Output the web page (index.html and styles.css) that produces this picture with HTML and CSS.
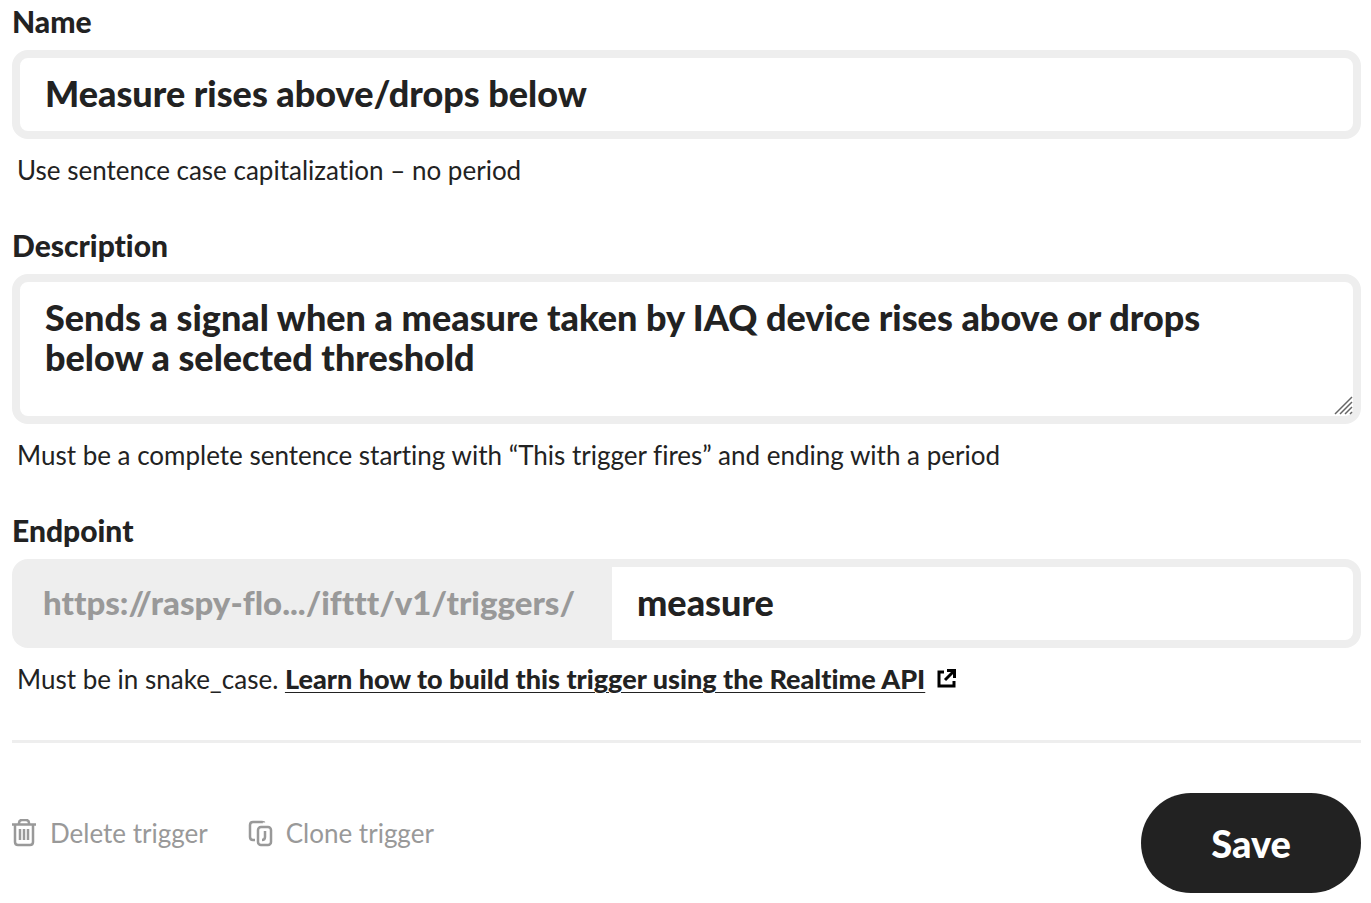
FILE: index.html
```html
<!DOCTYPE html>
<html lang="en">
<head>
<meta charset="utf-8">
<meta name="viewport" content="width=device-width, initial-scale=1">
<title>Edit trigger</title>
<link rel="stylesheet" href="styles.css">
</head>
<body>
<form class="trigger-form">
  <div class="field">
    <label class="label" for="name">Name</label>
    <input class="control" id="name" type="text" value="Measure rises above/drops below">
    <p class="hint">Use sentence case capitalization – no period</p>
  </div>
  <div class="field">
    <label class="label" for="description">Description</label>
    <div class="area">
      <textarea class="control control-area" id="description">Sends a signal when a measure taken by IAQ device rises above or drops below a selected threshold</textarea>
      <svg class="grip" viewBox="0 0 20 20" aria-hidden="true"><path d="M2 18 19 1M7 18 19 6M12 18 19 11M17 18l2-2"/></svg>
    </div>
    <p class="hint">Must be a complete sentence starting with “This trigger fires” and ending with a period</p>
  </div>
  <div class="field">
    <label class="label" for="endpoint">Endpoint</label>
    <div class="group">
      <span class="prefix">https://raspy-flo.../ifttt/v1/triggers/</span>
      <input class="group-input" id="endpoint" type="text" value="measure">
    </div>
    <p class="hint">Must be in snake_case. <a class="link" href="#realtime">Learn how to build this trigger using the Realtime API</a><svg class="external" viewBox="0 0 20 20" aria-hidden="true"><path d="M7 3H2v14h15v-5"/><path d="M8 11 16 3"/><path class="solid" d="M10 0h9v9h-3V3h-6z"/></svg></p>
  </div>
  <div class="footer">
    <div class="actions">
      <button class="action" type="button">
        <svg class="icon" viewBox="0 0 26 28" aria-hidden="true"><path d="M0 5.5h24"/><path d="M7 5V4q0-3 3-3h4q3 0 3 3v1"/><path d="M3 6v17q0 3 3 3h12q3 0 3-3V6"/><path d="M8 10v11M12 10v11M16 10v11"/></svg>
        <span>Delete trigger</span>
      </button>
      <button class="action" type="button">
        <svg class="icon" viewBox="0 0 26 28" aria-hidden="true"><path d="M16 3.5Q16 3 14 3H5Q2 3 2 6v12q0 3 3 3h2"/><rect x="10" y="8" width="13" height="18" rx="3"/><path d="M17 12v6q0 3-3 3"/></svg>
        <span>Clone trigger</span>
      </button>
    </div>
    <button class="save" type="submit">Save</button>
  </div>
</form>
</body>
</html>
```
FILE: styles.css
```css
* {
  box-sizing: border-box;
}

body {
  margin: 0;
  background: #fff;
  color: #222;
  font-family: Lato, "Open Sans", sans-serif;
  font-variant-ligatures: none;
}

.trigger-form {
  padding: 3px 10px 10px 12px;
}

.field {
  margin-bottom: 39px;
}

.label {
  display: block;
  margin-bottom: 11px;
  font-size: 30px;
  font-weight: 900;
  line-height: 36px;
}

.control {
  display: block;
  width: 100%;
  margin: 0;
  padding: 15px 25px 18px;
  border: 8px solid #eee;
  border-radius: 16px;
  background: #fff;
  color: #222;
  font-family: inherit;
  font-size: 36px;
  font-weight: 900;
  line-height: 40px;
  outline: none;
}

.area {
  position: relative;
}

.control-area {
  height: 150px;
  padding-right: 60px;
  resize: none;
  overflow: hidden;
}

.grip {
  position: absolute;
  right: 8px;
  bottom: 8px;
  width: 20px;
  height: 20px;
  fill: none;
  stroke: #666;
  stroke-width: 1.5;
}

.hint {
  margin: 13px 0 0;
  padding-left: 5px;
  font-size: 26px;
  line-height: 36px;
}

.link {
  color: inherit;
  font-size: 27px;
  font-weight: 900;
  text-decoration-thickness: 1px;
  text-underline-offset: 3px;
}

.external {
  width: 20px;
  height: 20px;
  margin-left: 12px;
  fill: none;
  stroke: #000;
  stroke-width: 3;
}

.solid {
  fill: #000;
  stroke: none;
}

.group {
  display: flex;
  padding: 8px;
  border-radius: 16px;
  background: #eee;
}

.prefix {
  flex: none;
  padding: 15px 37px 18px 23px;
  color: #999;
  font-size: 33px;
  font-weight: 900;
  line-height: 40px;
}

.group-input {
  flex: 1;
  min-width: 0;
  padding: 15px 25px 18px;
  border: 0;
  border-radius: 0 8px 8px 0;
  background: #fff;
  color: #222;
  font-family: inherit;
  font-size: 36px;
  font-weight: 900;
  line-height: 40px;
  outline: none;
}

.footer {
  display: flex;
  align-items: flex-start;
  justify-content: space-between;
  margin-top: 43px;
  padding-top: 50px;
  border-top: 3px solid #eee;
}

.actions {
  display: flex;
  gap: 40px;
  padding-top: 22px;
}

.action {
  display: flex;
  align-items: center;
  gap: 12px;
  padding: 0;
  border: 0;
  background: none;
  color: #999;
  font-family: inherit;
  font-size: 26px;
  line-height: 36px;
}

.icon {
  width: 26px;
  height: 28px;
  fill: none;
  stroke: #999;
  stroke-width: 2.5;
}

.save {
  padding: 30px 70px;
  border: 0;
  border-radius: 50px;
  background: #222;
  color: #fff;
  font-family: inherit;
  font-size: 38px;
  font-weight: 900;
  line-height: 40px;
}
```
